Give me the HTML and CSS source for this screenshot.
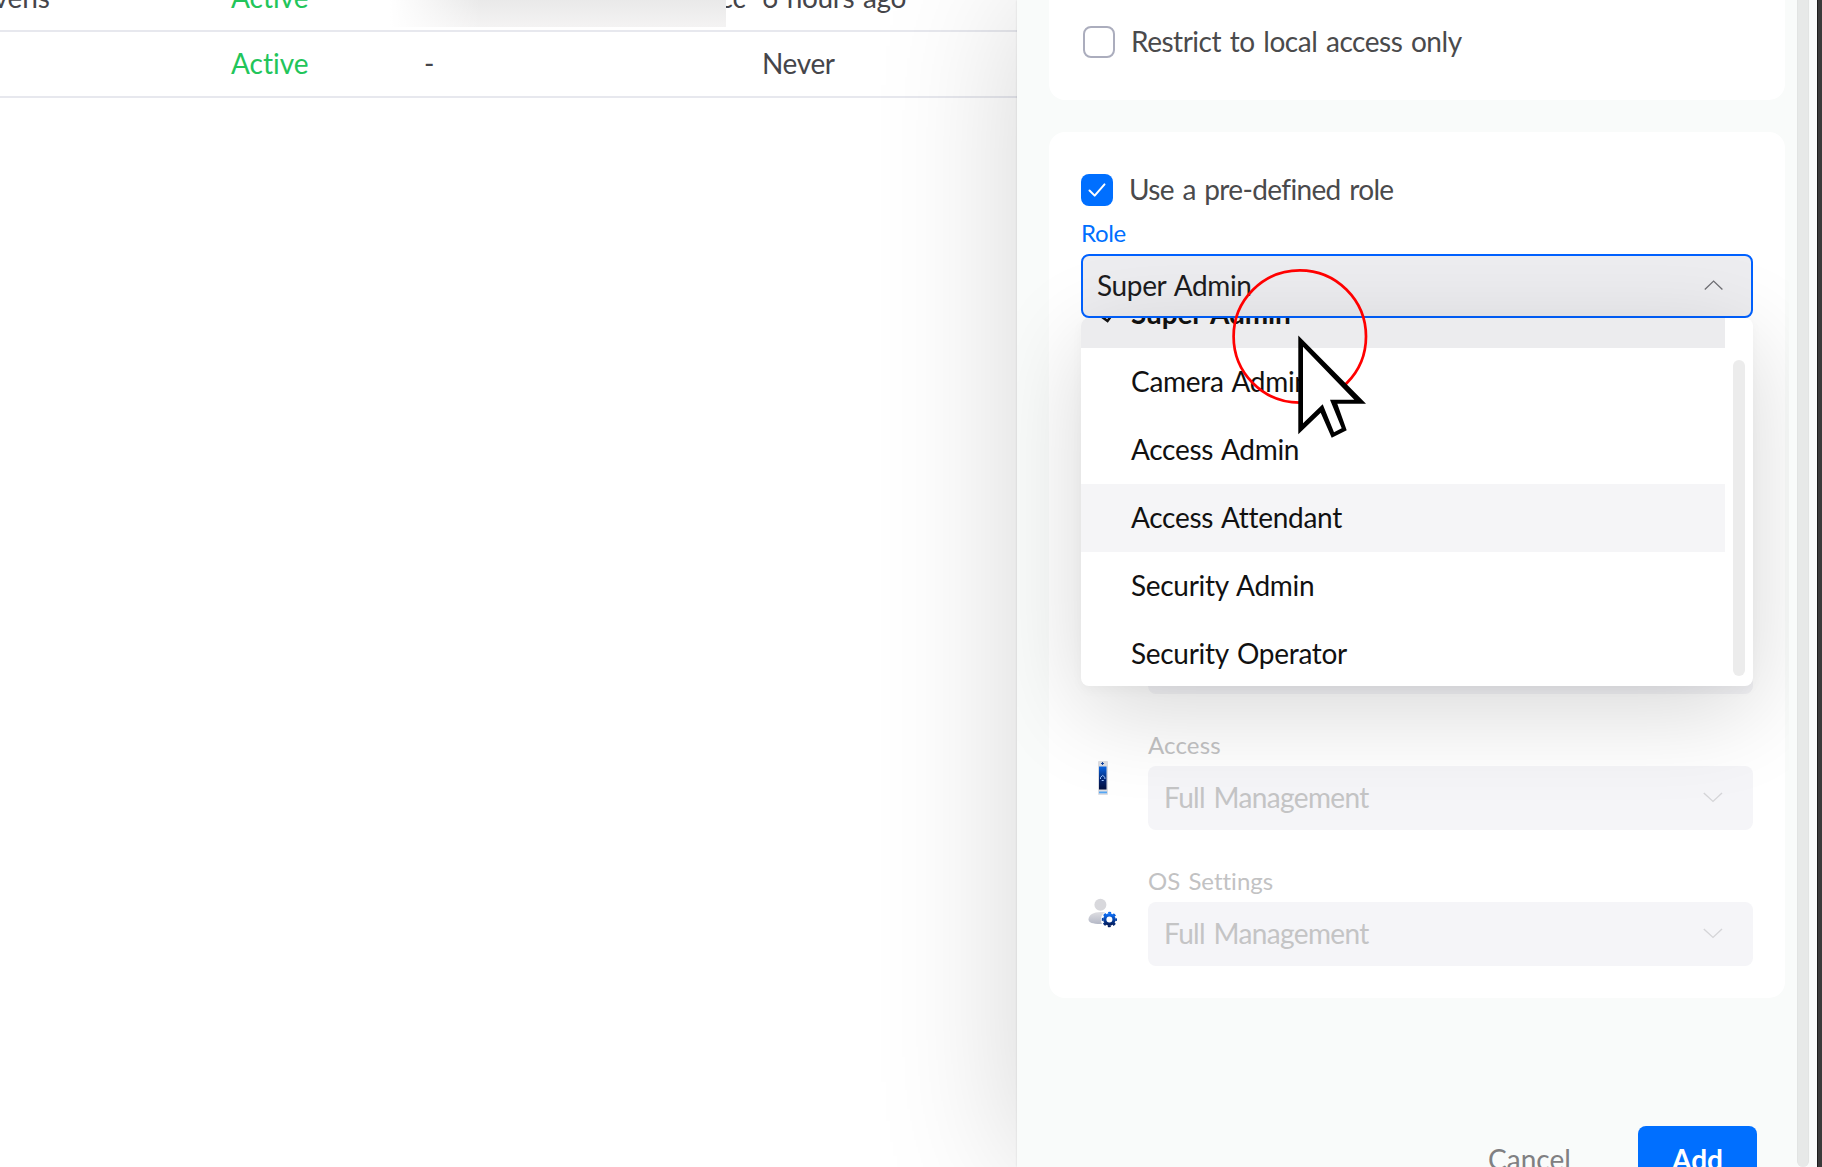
FILE: index.html
```html
<!DOCTYPE html>
<html lang="en">
<head>
<meta charset="utf-8">
<title>Add Admin</title>
<link rel="stylesheet" href="styles.css">
</head>
<body>
<div class="app">
  <main class="admins">
    <div class="row">
      <div class="cell cell-name"><span>vens</span></div>
      <div class="cell status"><span>Active</span></div>
      <div class="cell cell-redacted"><span class="tail">cc</span><div class="redaction"></div></div>
      <div class="cell"><span class="tight">6 hours ago</span></div>
    </div>
    <div class="row">
      <div class="cell"></div>
      <div class="cell status"><span>Active</span></div>
      <div class="cell"><span>-</span></div>
      <div class="cell"><span class="tight">Never</span></div>
    </div>
  </main>

  <aside class="panel">
    <div class="scroll">
      <section class="card card-access">
        <label class="check check-off"><i class="box"></i><span class="tighter">Restrict to local access only</span></label>
      </section>

      <section class="card card-role">
        <label class="check"><i class="box box-on"><svg width="32" height="32" viewBox="0 0 32 32"><path d="M8.5 16.5L13.7 21.6L23.5 10.4" fill="none" stroke="#fff" stroke-width="2" stroke-linecap="round" stroke-linejoin="round"/></svg></i><span class="tightest">Use a pre-defined role</span></label>
        <div class="label label-active"><span class="tight">Role</span></div>
        <div class="select select-open">
          <span class="tight">Super Admin</span>
          <svg class="chev" width="20" height="12" viewBox="0 0 20 12"><path d="M1.800 9.500L10.600 1.100L19.400 9.500" fill="none" stroke="#6f6f74" stroke-width="1.300"/></svg>
          <div class="menu">
            <div class="options">
              <div class="option option-selected"><svg class="tick" width="16" height="14" viewBox="0 0 16 14"><path d="M2 7L7.500 11L14 2" fill="none" stroke="#111" stroke-width="2.600"/></svg><span>Super Admin</span></div>
              <div class="option"><span>Camera Admin</span></div>
              <div class="option"><span>Access Admin</span></div>
              <div class="option option-hover"><span>Access Attendant</span></div>
              <div class="option"><span>Security Admin</span></div>
              <div class="option"><span>Security Operator</span></div>
            </div>
            <div class="thumb"></div>
          </div>
        </div>

        <div class="perm perm-covered"><div class="select select-off"></div></div>

        <div class="perm">
          <svg class="icon" width="32" height="36" viewBox="0 0 32 36">
            <defs><linearGradient id="reader" x1="0" y1="0" x2="0" y2="1"><stop offset="0" stop-color="#0b66e4"/><stop offset=".6" stop-color="#04246f"/><stop offset="1" stop-color="#02103f"/></linearGradient></defs>
            <rect x="11" y="1" width="10" height="34" rx="1" fill="#dcdde2"/>
            <path d="M15.500 2v3M14 3.500h3" stroke="#17479e" stroke-width="1"/>
            <rect x="12" y="6.500" width="7.500" height="23" fill="url(#reader)"/>
            <path d="M13.500 19v-1.600L15.700 15.400L17.900 17.400V19M14.700 20.500h2" fill="none" stroke="#9fc6ff" stroke-width="1"/>
            <rect x="12" y="31.500" width="8" height="1.800" fill="#55a7f5"/>
          </svg>
          <div class="field">
            <div class="label"><span class="wide">Access</span></div>
            <div class="select select-off"><span class="tightest">Full Management</span><svg class="chev" width="20" height="12" viewBox="0 0 20 12"><path d="M.8 1L10 9.400L19 1" fill="none" stroke="#d5d5d8" stroke-width="1.400"/></svg></div>
          </div>
        </div>

        <div class="perm">
          <svg class="icon" width="32" height="36" viewBox="0 0 32 36">
            <defs>
              <linearGradient id="body" x1="0" y1="0" x2="0" y2="1"><stop offset="0" stop-color="#dedee2"/><stop offset="1" stop-color="#b4b8c6"/></linearGradient>
              <linearGradient id="gear" x1="0" y1="0" x2="0" y2="1"><stop offset="0" stop-color="#0a6af0"/><stop offset="1" stop-color="#051f62"/></linearGradient>
            </defs>
            <circle cx="13.400" cy="8.700" r="6" fill="#d8d8dc"/>
            <path d="M1.500 23.500c0-4.600 5-7.500 12-7.500c3 0 5.500 .4 7.500 1.500V28H13.500c-8 0-12-1.500-12-4.500z" fill="url(#body)"/>
            <circle cx="22.400" cy="23.500" r="8.600" fill="#fff"/>
            <circle cx="22.400" cy="23.500" r="6.700" fill="none" stroke="url(#gear)" stroke-width="1.900" stroke-dasharray="2.900 2.362" stroke-dashoffset="1.450"/>
            <circle cx="22.400" cy="23.500" r="4.600" fill="none" stroke="url(#gear)" stroke-width="3.200"/>
          </svg>
          <div class="field">
            <div class="label"><span>OS Settings</span></div>
            <div class="select select-off"><span class="tightest">Full Management</span><svg class="chev" width="20" height="12" viewBox="0 0 20 12"><path d="M.8 1L10 9.400L19 1" fill="none" stroke="#d5d5d8" stroke-width="1.400"/></svg></div>
          </div>
        </div>
      </section>

      <footer class="actions">
        <button class="btn"><span>Cancel</span></button>
        <button class="btn btn-primary"><span>Add</span></button>
      </footer>
    </div>
    <div class="track"></div>
  </aside>
  <div class="edge"></div>

  <svg class="pointer" width="140" height="176" viewBox="1230 266 140 176">
    <circle cx="1299.800" cy="336.500" r="66.200" fill="none" stroke="#f00" stroke-width="2.700"/>
    <path d="M1298.300 335.500L1366 403.700H1337.300L1346.700 430.300L1331.700 437.700L1320.700 412.700L1298.300 434.300Z" fill="#000"/>
    <path d="M1303 346.700L1354.300 399.700H1330L1341.700 428.300L1334 432.300L1322.700 404.300L1303 423.300Z" fill="#fff"/>
  </svg>
</div>
</body>
</html>
```
FILE: styles.css
```css
* { box-sizing: border-box; }
body {
  margin: 0;
  overflow: hidden;
  background: #fff;
  font-family: Lato, "Liberation Sans", sans-serif;
  font-size: 28px;
  line-height: 34px;
  font-variant-ligatures: none;
  word-spacing: 2px;
  color: #4a4a4c;
}
.app { position: relative; display: flex; width: 1822px; height: 1167px; overflow: hidden; }
span { display: block; padding-bottom: 2px; line-height: 32px; white-space: nowrap; }
.wide { letter-spacing: .15px; }
.tight { letter-spacing: -.36px; }
.tighter { letter-spacing: -.48px; }
.tightest { letter-spacing: -.64px; }

/* Admin list, scrolled so that its last rows show */
.admins { width: 1017px; margin-top: -34px; flex: none; color: #45454a; }
.row {
  display: grid;
  grid-template-columns: 231px 193px 338px 1fr;
  align-items: center;
  height: 66px;
  border-bottom: 2px solid #e7e8ee;
}
.cell { height: 34px; }
.cell-name { width: 50px; display: flex; justify-content: flex-end; }
.status { color: #22c55a; }
.cell-redacted { position: relative; display: flex; justify-content: flex-end; padding-right: 16px; }
.redaction {
  position: absolute;
  left: -34px;
  top: 0;
  width: 336px;
  height: 46px;
  background: linear-gradient(90deg, #fff 0, rgba(255,255,255,0) 90px), linear-gradient(180deg, #e9e9e9 40%, #f4f3f3 100%);
}

/* Slide-over panel */
.panel {
  position: relative;
  display: flex;
  flex: none;
  width: 800px;
  background: #f9fbfa;
  box-shadow: 0 0 130px rgba(0,0,0,.17), 0 0 2px rgba(0,0,0,.12);
}
.scroll { width: 772px; padding-left: 32px; overflow: hidden; flex: none; }
.track { width: 12px; margin-left: 8px; background: #e7e9e8; border-radius: 0 0 6px 6px; border: solid #e2e4e3; border-width: 0 1px; }
.edge { position: relative; width: 5px; background: #3a3a3a; border-left: 1px solid #1c1c1c; }
.card { width: 736px; padding: 32px; background: #fff; }
.card-access { height: 100px; padding: 26px 34px; border-radius: 0 0 16px 16px; }
.card-role { margin-top: 32px; height: 866px; padding-top: 42px; border-radius: 16px; }

.check { display: flex; align-items: center; gap: 16px; height: 32px; }
.box { width: 32px; height: 32px; border: 2px solid #abadbd; border-radius: 8px; }
.box-on { border: 0; background: #006fff; }
.box svg { display: block; }

.label { height: 48px; padding-top: 11px; font-size: 24px; color: #c2c2c3; }
.label-active { color: #006fff; }
.select { display: flex; align-items: center; justify-content: space-between; height: 64px; padding: 0 30px 0 16px; border-radius: 8px; }
.select-open { position: relative; padding: 0 28px 0 14px; border: 2px solid #0061ff; background: #ededf0; color: #1c1c1e; }
.select-off { background: #f5f5f8; color: #c4c4c5; }

.menu {
  position: absolute;
  z-index: 1;
  left: -2px;
  top: 62px;
  width: 672px;
  height: 368px;
  border-radius: 8px;
  background: #fff;
  box-shadow: 0 24px 96px rgba(0,0,0,.16), 0 4px 12px rgba(0,0,0,.03);
}
.options { width: 644px; height: 368px; border-radius: 8px 0 0 8px; overflow: hidden; color: #111; letter-spacing: -.3px; }
.option { display: flex; align-items: center; height: 68px; padding-left: 50px; }
.option-selected { position: relative; margin-top: -38px; background: #ececee; font-weight: 700; letter-spacing: -.1px; }
.tick { position: absolute; left: 19px; top: 30px; }
.option-hover { background: #f5f5f7; }
.thumb { position: absolute; right: 8px; top: 42px; width: 12px; height: 316px; border-radius: 6px; background: #ececec; }

.perm { display: flex; align-items: flex-start; gap: 29px; height: 112px; margin-top: 24px; padding-left: 6px; }
.perm-covered { height: 64px; margin: 312px 0 0 67px; padding-left: 0; }
.perm-covered .select { flex: 1; }
.icon { flex: none; margin-top: 42px; width: 32px; }
.field { flex: 1; }

.actions { display: flex; justify-content: flex-end; width: 708px; margin-top: 128px; gap: 49px; }
.btn { width: 119px; height: 64px; padding: 3px 0 0; border: 0; border-radius: 8px; background: none; color: #808082; font: inherit; }
.btn-primary { background: #006fff; color: #fff; font-weight: 700; }

/* Recorded mouse pointer with its click ring */
.pointer { position: absolute; z-index: 2; left: 1230px; top: 266px; }
```
